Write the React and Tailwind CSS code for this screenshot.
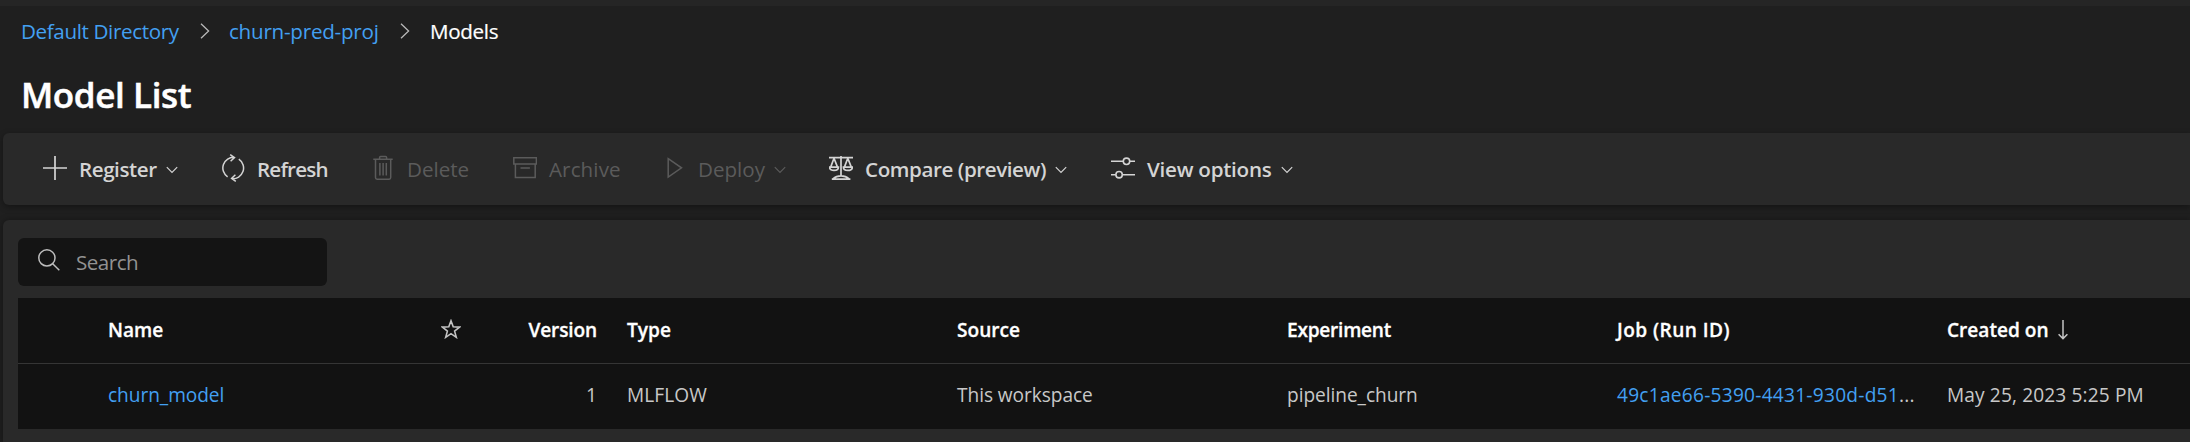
function Svg({ w = 24, h = 28, className = "", children, sw = 1.5 }) {
  return (
    <svg width={w} height={h} viewBox={`0 0 ${w} ${h}`} fill="none" stroke="currentColor" strokeWidth={sw} className={`shrink-0 ${className}`}>
      {children}
    </svg>
  );
}

const PlusIcon = () => (
  <Svg sw={1.7}><path d="M12 2v24M0 14h24" /></Svg>
);

const RefreshIcon = () => (
  <Svg>
    <path d="M6.6 22.8A10.6 10.6 0 0 1 13.4 3.4M9.2 0.6l4.3 3L9.6 7.2" />
    <path d="M17.8 5.2A10.6 10.6 0 0 1 10.9 24.6M14.8 27.4l-4.2-3 3.8-3.6" />
  </Svg>
);

const TrashIcon = () => (
  <Svg>
    <path d="M2.3 5.3h19.4M8.6 5V3.6c0-.7.4-1 1-1h5c.6 0 1 .3 1 1V5M4.5 5.3v18.2c0 1 .6 1.7 1.6 1.7h12c1 0 1.6-.7 1.6-1.7V5.3M8.9 9v12.6M12.1 9v12.6M15.3 9v12.6" />
  </Svg>
);

const ArchiveIcon = () => (
  <Svg><path d="M.8 3.8h22.6v6.3H.8zM2.4 10.1v13.3h19.8V10.1M7.5 14h9.4" /></Svg>
);

const PlayIcon = () => (
  <Svg><path d="M6.2 4.6l13.3 9.2-13.3 9.3z" /></Svg>
);

const ScalesIcon = () => (
  <Svg sw={1.7}>
    <path d="M0 3.6h24M12 2v19.5M2.8 25.2h18.6M4 24.8c2-1.8 5-2.9 8-2.9s6 1.1 8 2.9" />
    <path d="M5 4.2L1.6 13.4M5 4.2l3.6 9.2M.6 13.2h8.8c0 2-1.6 3.2-4.4 3.2S.6 15.2.6 13.2zM18.8 4.2l-3.5 9.2M18.8 4.2l3.6 9.2M14.4 13.2h8.9c0 2-1.7 3.2-4.5 3.2s-4.4-1.2-4.4-3.2z" />
  </Svg>
);

const SlidersIcon = () => (
  <Svg sw={1.6}>
    <path d="M0 7.3h12.2M18.8 7.3H24M0 20.7h4.9M11.3 20.7H24" />
    <circle cx="15.5" cy="7.3" r="3.2" />
    <circle cx="8.1" cy="20.7" r="3.2" />
  </Svg>
);

const ChevronDown = () => (
  <Svg w={12} h={8} sw={1.2} className="ml-[9px] mt-[2px]"><path d="M.8 1.2L6 6.4l5.2-5.2" /></Svg>
);

const ChevronRight = () => (
  <Svg w={10} h={16} sw={1.3} className="text-[#b8b8b8]"><path d="M1 .8l7.6 7.2L1 15.2" /></Svg>
);

function Command({ icon, label, width, spacing, disabled, menu }) {
  return (
    <button
      className={`flex h-full shrink-0 items-center ${width} ${
        disabled ? "font-normal text-[#5b5b5b]" : "font-semibold text-[#d4d4d4]"
      }`}
    >
      <span className="-mt-[2px]">{icon}</span>
      <span className={`ml-[12px] whitespace-nowrap ${spacing}`}>{label}</span>
      {menu && <ChevronDown />}
    </button>
  );
}

const row = "grid grid-cols-[90px_308px_94px_117px_330px_330px_330px_330px_1fr] items-center whitespace-nowrap text-[19.1px]";

export default function App() {
  return (
    <div className="flex h-[442px] w-full flex-col overflow-hidden bg-[#1f1f1f] font-['Open_Sans',sans-serif] text-[20.6px] text-white">
      <div className="h-[6px] shrink-0 bg-[#252525]" />

      <nav className="flex h-[50px] shrink-0 items-center pl-[21px] leading-none whitespace-nowrap">
        <a className="w-[179px] tracking-[-0.36px] text-[#43a0f2]">Default Directory</a>
        <ChevronRight />
        <a className="ml-[19px] w-[171px] tracking-[-0.24px] text-[#43a0f2]">churn-pred-proj</a>
        <ChevronRight />
        <span className="ml-[20px] tracking-[-0.3px] [-webkit-text-stroke:0.2px]">Models</span>
      </nav>

      <h1 className="flex h-[77px] shrink-0 items-center pl-[21px] text-[35px] leading-none font-semibold tracking-[-0.4px] [-webkit-text-stroke:0.5px]">
        Model List
      </h1>

      <div className="ml-[3px] flex h-[72px] shrink-0 items-center rounded-l-[6px] bg-[#292929] pl-[40px] shadow-[0_2px_6px_rgba(0,0,0,0.35)]">
        <Command icon={<PlusIcon />} label="Register" width="w-[178px]" spacing="tracking-[-0.44px]" menu />
        <Command icon={<RefreshIcon />} label="Refresh" width="w-[150px]" spacing="tracking-[-0.8px]" />
        <Command icon={<TrashIcon />} label="Delete" width="w-[142px]" spacing="tracking-[0px]" disabled />
        <Command icon={<ArchiveIcon />} label="Archive" width="w-[149px]" spacing="tracking-[0.1px]" disabled />
        <Command icon={<PlayIcon />} label="Deploy" width="w-[167px]" spacing="tracking-[0px]" disabled menu />
        <Command icon={<ScalesIcon />} label="Compare (preview)" width="w-[282px]" spacing="tracking-[-0.42px]" menu />
        <Command icon={<SlidersIcon />} label="View options" width="w-[190px]" spacing="tracking-[-0.25px]" menu />
      </div>

      <main className="mt-[15px] ml-[3px] flex-1 rounded-tl-[6px] bg-[#292929] pt-[18px] pl-[15px] shadow-[0_0_6px_rgba(0,0,0,0.35)]">
        <div className="flex h-[48px] w-[309px] items-center rounded-[6px] bg-[#141414] pl-[20px]">
          <Svg w={22} h={22} sw={1.5} className="-mt-[4px] text-[#bdbdbd]">
            <circle cx="8.9" cy="8.9" r="8.1" />
            <path d="M14.7 14.7l6.6 6.6" />
          </Svg>
          <span className="ml-[16px] tracking-[-0.5px] text-[#929292]">Search</span>
        </div>

        <div className="mt-[12px] bg-[#121212]">
          <div className={`${row} h-[66px] border-b border-[#353535] font-semibold`}>
            <span />
            <span className="[-webkit-text-stroke:0.3px]">Name</span>
            <Svg w={20} h={20} sw={1.6} className="-mt-[3px] ml-[25px] text-[#c4c4c4]">
              <path d="M10 1.8l2.2 6 6.4.3-5 4 1.7 6.2-5.3-3.6-5.3 3.6 1.7-6.2-5-4 6.4-.3z" />
            </Svg>
            <span className="pr-[30px] text-right tracking-[-0.15px] [-webkit-text-stroke:0.3px]">Version</span>
            <span className="[-webkit-text-stroke:0.3px]">Type</span>
            <span className="[-webkit-text-stroke:0.3px]">Source</span>
            <span className="tracking-[-0.25px] [-webkit-text-stroke:0.3px]">Experiment</span>
            <span className="tracking-[0.45px] [-webkit-text-stroke:0.3px]">Job (Run ID)</span>
            <span className="flex items-center [-webkit-text-stroke:0.3px]">
              Created on
              <Svg w={12} h={20} sw={1.5} className="ml-[8px] text-[#c4c4c4]">
                <path d="M6 0v18.6M1.6 14.2L6 18.6l4.4-4.4" />
              </Svg>
            </span>
          </div>
          <div className={`${row} h-[65px] pb-[2px] text-[#c8c8c8]`}>
            <span />
            <a className="tracking-[-0.05px] text-[#43a0f2]">churn_model</a>
            <span />
            <span className="pr-[30px] text-right">1</span>
            <span className="tracking-[0.1px]">MLFLOW</span>
            <span className="tracking-[-0.05px]">This workspace</span>
            <span className="tracking-[-0.05px]">pipeline_churn</span>
            <span className="tracking-[0.26px]"><a className="text-[#43a0f2]">49c1ae66-5390-4431-930d-d51</a>...</span>
            <span className="tracking-[0.14px]">May 25, 2023 5:25 PM</span>
          </div>
        </div>
      </main>
    </div>
  );
}
